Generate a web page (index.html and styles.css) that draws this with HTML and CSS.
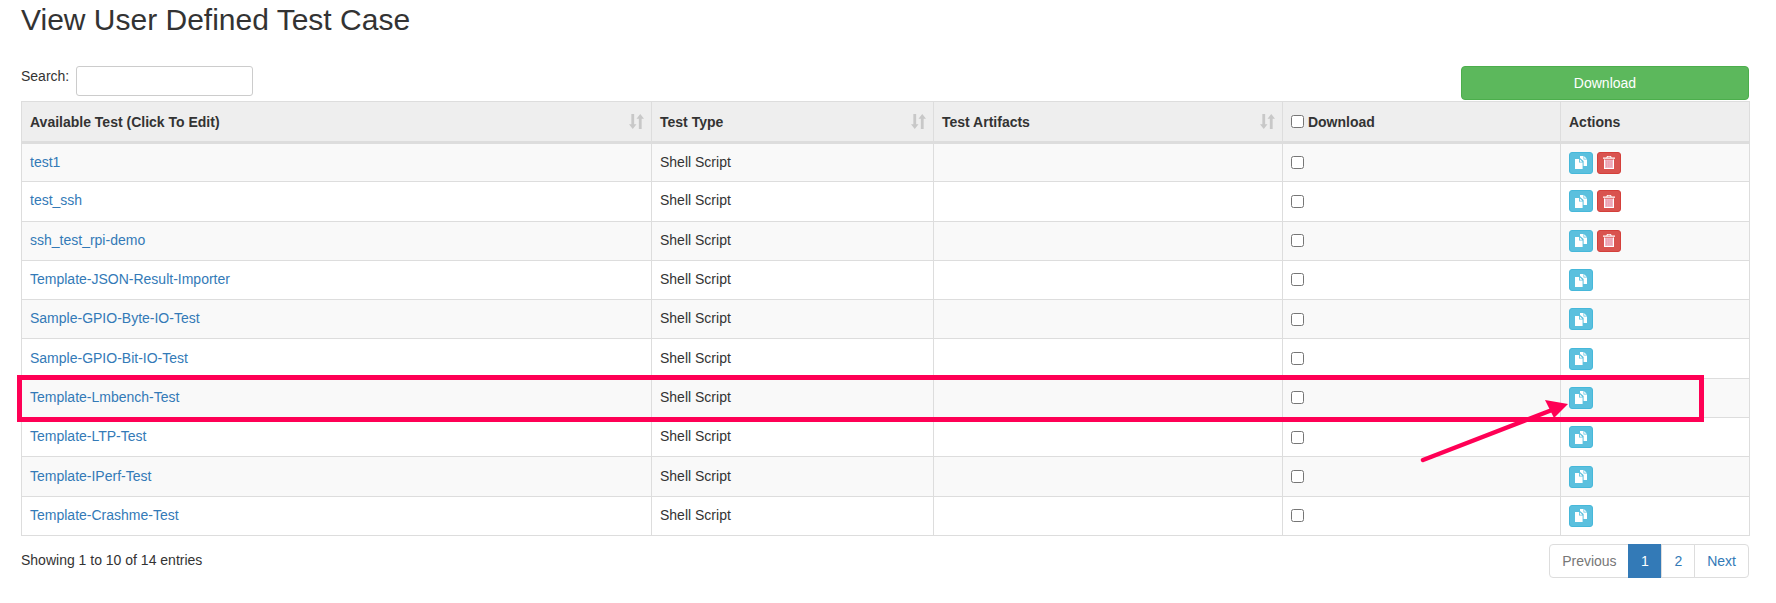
FILE: index.html
```html
<!DOCTYPE html>
<html lang="en">
<head>
<meta charset="utf-8">
<title>View User Defined Test Case</title>
<link rel="stylesheet" href="styles.css">
</head>
<body>
<svg width="0" height="0" class="defs">
  <defs>
    <symbol id="i-copy" viewBox="0 0 12 13">
      <path fill="#fff" d="M5 0H8.5V3.5H12V10H8.6V5L5 2Z"/>
      <path fill="#fff" d="M9.2 .3L11.7 2.8H9.2Z"/>
      <path fill="#fff" d="M0 3H4V6.5H7.6V13H0Z"/>
      <path fill="#fff" d="M4.8 3.2L7.4 5.7H4.8Z"/>
    </symbol>
    <symbol id="i-trash" viewBox="0 0 12 13">
      <path fill="#fff" d="M4 0H8L8.6 1.4H12V2.8H0V1.4H3.4ZM4.7 .8L4.4 1.4H7.6L7.3 .8Z"/>
      <path fill="#f2b8c8" d="M1.3 3.6H10.7V12.2H1.3Z"/>
      <path fill="#fff" d="M1 3.4H2V12H10V3.4H11V13H1Z"/>
      <path fill="#e58a9a" d="M3.5 4.5H4.2V11.2H3.5ZM5.6 4.5H6.3V11.2H5.6ZM7.7 4.5H8.4V11.2H7.7Z"/>
    </symbol>
    <symbol id="i-sort" viewBox="0 0 14 14">
      <path fill="#c8c8c8" d="M2.2 0H4.8V9.5H7L3.5 14L0 9.5H2.2Z"/>
      <path fill="#c8c8c8" d="M9.2 14H11.8V4.5H14L10.5 0L7 4.5H9.2Z"/>
    </symbol>
  </defs>
</svg>

<main class="page">
  <h2 class="title">View User Defined Test Case</h2>

  <div class="toolbar">
    <label class="search">Search: <input type="search" class="search-input"></label>
    <button type="button" class="btn-download">Download</button>
  </div>

  <table class="grid">
    <colgroup>
      <col class="c-name"><col class="c-type"><col class="c-art"><col class="c-dl"><col class="c-act">
    </colgroup>
    <thead>
      <tr>
        <th class="sortable">Available Test (Click To Edit)<svg class="sort"><use href="#i-sort"/></svg></th>
        <th class="sortable">Test Type<svg class="sort"><use href="#i-sort"/></svg></th>
        <th class="sortable">Test Artifacts<svg class="sort"><use href="#i-sort"/></svg></th>
        <th><input type="checkbox" class="check check-head"> Download</th>
        <th>Actions</th>
      </tr>
    </thead>
    <tbody>
      <tr><td><a href="#">test1</a></td><td>Shell Script</td><td></td><td class="pick"><input type="checkbox" class="check"></td><td class="actions"><span class="ico info"><svg class="g"><use href="#i-copy"/></svg></span><span class="ico danger"><svg class="g"><use href="#i-trash"/></svg></span></td></tr>
      <tr><td><a href="#">test_ssh</a></td><td>Shell Script</td><td></td><td class="pick"><input type="checkbox" class="check"></td><td class="actions"><span class="ico info"><svg class="g"><use href="#i-copy"/></svg></span><span class="ico danger"><svg class="g"><use href="#i-trash"/></svg></span></td></tr>
      <tr><td><a href="#">ssh_test_rpi-demo</a></td><td>Shell Script</td><td></td><td class="pick"><input type="checkbox" class="check"></td><td class="actions"><span class="ico info"><svg class="g"><use href="#i-copy"/></svg></span><span class="ico danger"><svg class="g"><use href="#i-trash"/></svg></span></td></tr>
      <tr><td><a href="#">Template-JSON-Result-Importer</a></td><td>Shell Script</td><td></td><td class="pick"><input type="checkbox" class="check"></td><td class="actions"><span class="ico info"><svg class="g"><use href="#i-copy"/></svg></span></td></tr>
      <tr><td><a href="#">Sample-GPIO-Byte-IO-Test</a></td><td>Shell Script</td><td></td><td class="pick"><input type="checkbox" class="check"></td><td class="actions"><span class="ico info"><svg class="g"><use href="#i-copy"/></svg></span></td></tr>
      <tr><td><a href="#">Sample-GPIO-Bit-IO-Test</a></td><td>Shell Script</td><td></td><td class="pick"><input type="checkbox" class="check"></td><td class="actions"><span class="ico info"><svg class="g"><use href="#i-copy"/></svg></span></td></tr>
      <tr><td><a href="#">Template-Lmbench-Test</a></td><td>Shell Script</td><td></td><td class="pick"><input type="checkbox" class="check"></td><td class="actions"><span class="ico info"><svg class="g"><use href="#i-copy"/></svg></span></td></tr>
      <tr><td><a href="#">Template-LTP-Test</a></td><td>Shell Script</td><td></td><td class="pick"><input type="checkbox" class="check"></td><td class="actions"><span class="ico info"><svg class="g"><use href="#i-copy"/></svg></span></td></tr>
      <tr><td><a href="#">Template-IPerf-Test</a></td><td>Shell Script</td><td></td><td class="pick"><input type="checkbox" class="check"></td><td class="actions"><span class="ico info"><svg class="g"><use href="#i-copy"/></svg></span></td></tr>
      <tr><td><a href="#">Template-Crashme-Test</a></td><td>Shell Script</td><td></td><td class="pick"><input type="checkbox" class="check"></td><td class="actions"><span class="ico info"><svg class="g"><use href="#i-copy"/></svg></span></td></tr>
    </tbody>
  </table>

  <div class="footer">
    <div class="info-text">Showing 1 to 10 of 14 entries</div>
    <nav class="pager">
      <a href="#" class="pg pg-prev">Previous</a>
      <a href="#" class="pg pg-cur">1</a>
      <a href="#" class="pg pg-two">2</a>
      <a href="#" class="pg pg-next">Next</a>
    </nav>
  </div>
</main>

<svg class="annot" viewBox="0 0 1776 603" width="1776" height="603">
  <rect class="annot-box" x="19.5" y="377.5" width="1682" height="42"/>
  <line class="annot-line" x1="1423" y1="460" x2="1552" y2="410"/>
  <path class="annot-head" d="M1568 404L1545 400L1554 418Z"/>
</svg>
</body>
</html>
```

FILE: styles.css
```css
* { box-sizing: border-box; }

html, body {
  margin: 0;
  padding: 0;
  height: 603px;
  overflow: hidden;
  background: #fff;
}

body {
  position: relative;
  font-family: "Liberation Sans", Arial, sans-serif;
  font-size: 14px;
  line-height: 20px;
  color: #333;
}

.defs { position: absolute; }

.page { padding: 0 27px 0 21px; }

.title {
  margin: 0;
  height: 66px;
  padding-top: 3px;
  font-size: 30px;
  line-height: 33px;
  font-weight: 400;
}

.toolbar {
  display: flex;
  justify-content: space-between;
  align-items: flex-start;
  height: 35px;
}

.search { display: flex; align-items: flex-start; gap: 7px; line-height: 20px; }

.search-input {
  width: 177px;
  height: 30px;
  margin: 0;
  border: 1px solid #ccc;
  border-radius: 3px;
  background: #fff;
  outline: none;
}

.btn-download {
  width: 288px;
  height: 34px;
  border: 1px solid #4cae4c;
  border-radius: 4px;
  background: #5cb85c;
  color: #fff;
  font: 14px/20px "Liberation Sans", Arial, sans-serif;
}

.grid {
  width: 1728px;
  table-layout: fixed;
  border-collapse: collapse;
}

.c-name { width: 630px; }
.c-type { width: 282px; }
.c-art { width: 349px; }
.c-dl { width: 278px; }
.c-act { width: 189px; }

.grid th, .grid td {
  border: 1px solid #ddd;
  padding: 8px;
  text-align: left;
}

.grid th {
  position: relative;
  height: 41px;
  background: #eee;
  border-bottom-width: 3px;
  font-weight: 700;
  vertical-align: middle;
}

.grid tbody tr { height: 39.3px; }
.grid tbody td { vertical-align: middle; padding-top: 0; padding-bottom: 2px; }
.grid tbody td.pick { padding-bottom: 3px; }
.grid tbody td.actions { padding-bottom: 0; }
.grid tbody tr:nth-child(odd) { background: #f9f9f9; }

.grid a { color: #337ab7; text-decoration: none; }

.sort {
  position: absolute;
  right: 7px;
  top: 12px;
  width: 15px;
  height: 15px;
}

.check {
  display: inline-block;
  width: 13px;
  height: 13px;
  margin: 0;
  vertical-align: middle;
}

.check-head { vertical-align: -1px; }

.actions { font-size: 0; }

.ico {
  display: inline-flex;
  align-items: center;
  justify-content: center;
  width: 24px;
  height: 22px;
  border-radius: 3px;
  border: 1px solid transparent;
  vertical-align: middle;
}

.ico + .ico { margin-left: 4px; }

.info { background: #5bc0de; border-color: #46b8da; }
.danger { background: #d9534f; border-color: #d43f3a; }

.g { width: 12px; height: 13px; }

.footer {
  display: flex;
  justify-content: space-between;
  align-items: flex-start;
  padding-top: 8px;
}

.info-text { padding-top: 6px; }

.pager { display: flex; }

.pg {
  height: 34px;
  padding: 6px 12px;
  border: 1px solid #ddd;
  margin-left: -1px;
  color: #337ab7;
  background: #fff;
  text-decoration: none;
}

.pg-prev { margin-left: 0; padding-right: 11px; color: #777; border-radius: 4px 0 0 4px; }
.pg-cur { background: #337ab7; border-color: #337ab7; color: #fff; padding: 6px 12.5px; }
.pg-next { border-radius: 0 4px 4px 0; }

.annot {
  position: absolute;
  left: 0;
  top: 0;
  pointer-events: none;
}

.annot-box { fill: none; stroke: #ff0055; stroke-width: 5; }
.annot-line { stroke: #ff0055; stroke-width: 4.5; stroke-linecap: round; }
.annot-head { fill: #ff0055; }
```
